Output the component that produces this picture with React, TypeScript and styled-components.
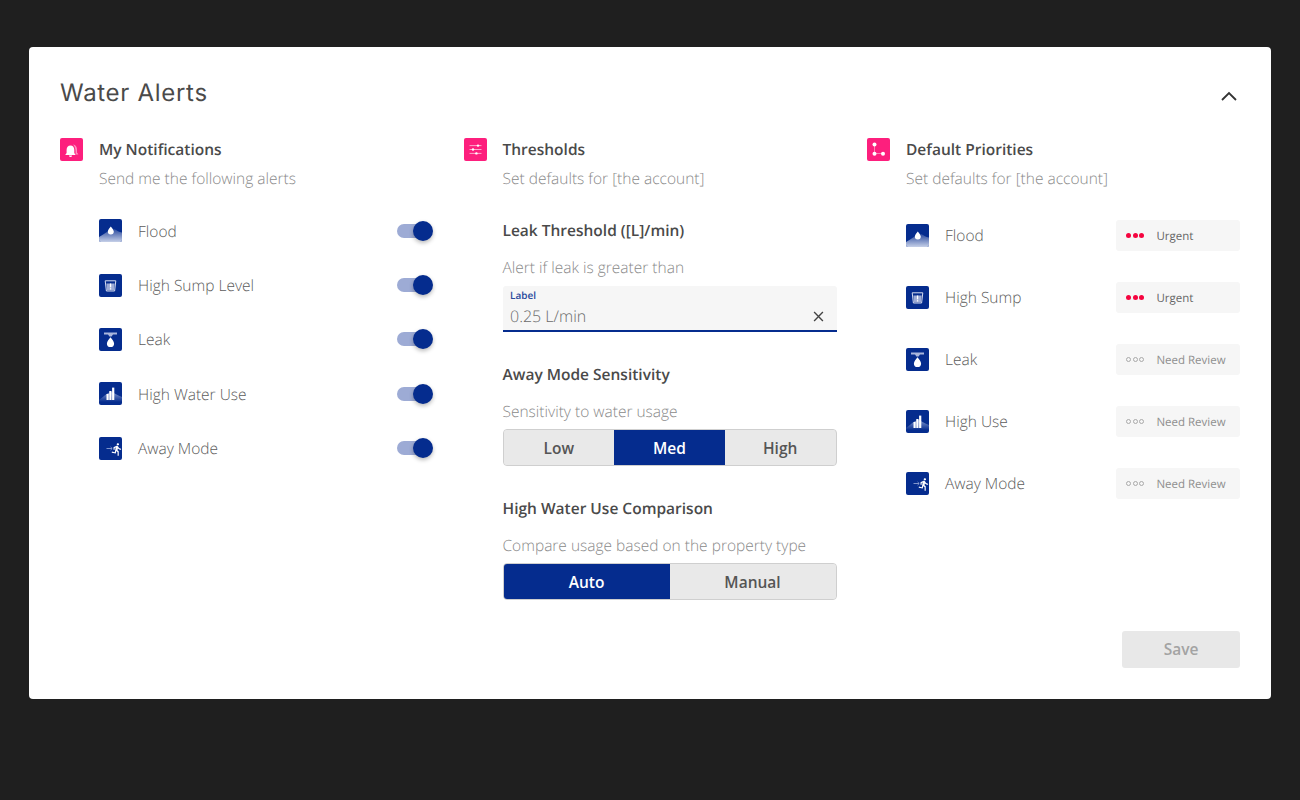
import React from "react";
import styled, { createGlobalStyle } from "styled-components";
import { MdDirectionsRun } from "react-icons/md";

const Global = createGlobalStyle`
  html, body { margin: 0; padding: 0; background: #1f1f1f; }
  body { font-family: "Open Sans", "Liberation Sans", sans-serif; text-rendering: geometricPrecision; }
  * { box-sizing: border-box; }
`;

const Page = styled.div`
  width: 1300px;
  height: 800px;
  padding: 47px 29px 101px;
  background: #1f1f1f;
`;
const Card = styled.main`
  height: 652px;
  background: #fff;
  border-radius: 4px;
  padding: 0 31px 31px;
  display: flex;
  flex-direction: column;
`;
const Header = styled.header`
  height: 90px;
  display: flex;
  justify-content: space-between;
  align-items: flex-start;
`;
const Title = styled.h1`
  margin: 29px 0 0;
  font-family: "Inter", "Liberation Sans", sans-serif;
  font-size: 24px;
  line-height: 33px;
  font-weight: 400;
  letter-spacing: 0.7px;
  color: #4a4a4a;
`;
const Collapse = styled.svg`
  width: 18px;
  height: 12px;
  margin: 43px 2px 0 0;
`;
const Columns = styled.div`
  flex: 1;
  display: grid;
  grid-template-columns: 403.5px 403.5px 1fr;
`;
const Column = styled.section`
  display: flex;
  flex-direction: column;
`;
const SectionHead = styled.div`
  display: grid;
  grid-template-columns: 39px 1fr;
  align-items: center;
`;
const PinkIcon = styled.span`
  width: 23px;
  height: 23px;
  border-radius: 2px;
  background: #fd1f7d;
  display: block;
`;
const PinkSvg = styled.svg`
  width: 23px;
  height: 23px;
  display: block;
`;
const SectionTitle = styled.h2`
  margin: 0;
  font-size: 15.5px;
  line-height: 24px;
  font-weight: 600;
  color: #4a4a4a;
`;
const SectionSub = styled.p`
  margin: 5px 0 0 39px;
  font-size: 15.5px;
  line-height: 24px;
  font-weight: 300;
  color: #8a8a8a;
`;
const AlertList = styled.ul<{ $top: number }>`
  list-style: none;
  margin: ${(p) => p.$top}px 0 0 39px;
  padding: 0;
  display: flex;
  flex-direction: column;
`;
const AlertRow = styled.li<{ $pitch: number }>`
  height: ${(p) => p.$pitch}px;
  display: flex;
  align-items: center;
  justify-content: space-between;
`;
const AlertLabel = styled.div`
  display: flex;
  align-items: center;
  gap: 16px;
  font-size: 15.5px;
  font-weight: 300;
  color: #5c5c5c;
`;
const BlueSvg = styled.svg`
  width: 23px;
  height: 23px;
  display: block;
  flex: none;
`;
const Toggle = styled.span`
  position: relative;
  display: block;
  width: 36px;
  height: 20px;
  margin-right: 31px;
  &::before {
    content: "";
    position: absolute;
    left: 0;
    top: 3px;
    width: 33px;
    height: 14px;
    border-radius: 7px;
    background: #9dabd5;
  }
  &::after {
    content: "";
    position: absolute;
    right: 0;
    top: 0;
    width: 20px;
    height: 20px;
    border-radius: 50%;
    background: #052c8e;
    box-shadow: 0 2px 4px rgba(0, 0, 0, 0.28);
  }
`;
const Thresholds = styled.div`
  margin: 0 0 0 39px;
  width: 334px;
  display: flex;
  flex-direction: column;
`;
const FieldTitle = styled.h3<{ $top: number }>`
  margin: ${(p) => p.$top}px 0 0;
  font-size: 15.5px;
  line-height: 24px;
  font-weight: 600;
  color: #4a4a4a;
`;
const FieldSub = styled.p<{ $gap: number }>`
  margin: 13px 0 ${(p) => p.$gap}px;
  font-size: 15.5px;
  line-height: 24px;
  font-weight: 300;
  color: #8a8a8a;
`;
const InputBox = styled.div`
  height: 46px;
  background: #f6f6f6;
  border-radius: 3px 3px 0 0;
  border-bottom: 2px solid #052c8e;
  padding: 1px 12.5px 1px 7.5px;
  display: grid;
  grid-template-columns: 1fr auto;
  align-items: center;
`;
const InputLabel = styled.label`
  grid-column: 1 / 3;
  font-size: 10px;
  line-height: 14px;
  font-weight: 600;
  color: #2a4a9c;
`;
const InputValue = styled.span`
  font-size: 16px;
  line-height: 24px;
  font-weight: 300;
  color: #6a6a6a;
`;
const ClearSvg = styled.svg`
  width: 11px;
  height: 11px;
  display: block;
`;
const Segmented = styled.div<{ $count: number }>`
  height: 37px;
  display: grid;
  grid-template-columns: repeat(${(p) => p.$count}, 1fr);
  border: 1px solid #cfcfcf;
  border-radius: 4px;
  overflow: hidden;
  background: #e9e9e9;
`;
const Segment = styled.button<{ $active?: boolean }>`
  border: 0;
  padding: 0;
  font: 600 15.5px "Open Sans", "Liberation Sans", sans-serif;
  color: ${(p) => (p.$active ? "#fff" : "#555")};
  background: ${(p) => (p.$active ? "#052c8e" : "#e9e9e9")};
`;
const Chip = styled.div<{ $urgent?: boolean }>`
  width: 124px;
  height: 31px;
  border-radius: 3px;
  background: #f6f6f6;
  padding-left: 10px;
  display: flex;
  align-items: center;
  gap: 12px;
  font-size: 11.5px;
  font-weight: 400;
  color: ${(p) => (p.$urgent ? "#666" : "#8f8f8f")};
`;
const ChipText = styled.span`
  padding-top: 2px;
`;
const Dots = styled.span`
  display: flex;
  gap: 1.7px;
`;
const Dot = styled.i<{ $urgent?: boolean }>`
  width: 5px;
  height: 5px;
  border-radius: 50%;
  display: block;
  background: ${(p) => (p.$urgent ? "#f5043f" : "transparent")};
  border: ${(p) => (p.$urgent ? "0" : "1px solid #a9a9a9")};
`;
const Footer = styled.footer`
  display: flex;
  justify-content: flex-end;
`;
const SaveButton = styled.button`
  width: 118px;
  height: 37px;
  border: 0;
  border-radius: 3px;
  background: #e8e8e8;
  color: #a3a3a3;
  padding: 0 0 1px;
  font: 600 15.5px "Open Sans", "Liberation Sans", sans-serif;
`;

const Grad = ({ id, from, to }: { id: string; from: string; to: string }) => (
  <defs>
    <linearGradient id={id} x1="0" y1="0" x2="0" y2="1">
      <stop offset="0" stopColor={from} />
      <stop offset="1" stopColor={to} />
    </linearGradient>
  </defs>
);
const Base = () => <rect width="23" height="23" rx="2" fill="#052c8e" />;

const Drop = ({ x, y, s = 1 }: { x: number; y: number; s?: number }) => (
  <path
    transform={`translate(${x} ${y}) scale(${s})`}
    d="M0 -4 C1.2 -2.2 3 -0.6 3 1.2 A3 3 0 0 1 -3 1.2 C-3 -0.6 -1.2 -2.2 0 -4Z"
    fill="#fff"
  />
);

const FloodIcon = ({ uid }: { uid: string }) => (
  <BlueSvg viewBox="0 0 23 23">
    <Grad id={uid} from="#2a4a9e" to="#c6d0e8" />
    <Base />
    <path d="M0 18 C5 15 10 11 15 10 C18 11.5 20 13 23 13.5 V21 a2 2 0 0 1 -2 2 H2 a2 2 0 0 1 -2 -2Z" fill={`url(#${uid})`} />
    <Drop x={11.8} y={11.4} s={1} />
  </BlueSvg>
);
const SumpIcon = () => (
  <BlueSvg viewBox="0 0 23 23">
    <Base />
    <path d="M6.2 6.8 H16.8 L15.6 17 H7.4Z" fill="none" stroke="#d6dcf0" strokeWidth="1" />
    <path d="M7.4 9.5 H15.7 L15 16.4 H8Z" fill="#9dabd5" />
    <rect x="10.9" y="9.5" width="1.3" height="3.9" fill="#fff" />
    <rect x="10.9" y="14.2" width="1.3" height="1.3" fill="#fff" />
  </BlueSvg>
);
const LeakIcon = () => (
  <BlueSvg viewBox="0 0 23 23">
    <Base />
    <path d="M5 4.5 H18 V6.6 H14 L12.6 8.6 H10.4 L9 6.6 H5Z" fill="#a9b6dc" />
    <Drop x={11.5} y={14} s={1.2} />
  </BlueSvg>
);
const UseIcon = ({ uid }: { uid: string }) => (
  <BlueSvg viewBox="0 0 23 23">
    <Grad id={uid} from="#7f95cc" to="#052c8e" />
    <Base />
    <path d="M0 18 C4 15 8 11 11.5 10 C15 10.5 19 14 23 15 V20 H0Z" fill={`url(#${uid})`} />
    <rect x="7.5" y="12" width="2.2" height="6" fill="#fff" />
    <rect x="10.3" y="9" width="2.2" height="9" fill="#fff" />
    <rect x="13.1" y="5.6" width="2.2" height="12.4" fill="#fff" />
  </BlueSvg>
);
const AwayIcon = () => (
  <BlueSvg viewBox="0 0 23 23">
    <Base />
    <path d="M7.5 11.5 H13 M11.6 10 L13.2 11.5 L11.6 13" fill="none" stroke="#8fa0d2" strokeWidth="0.9" />
    <MdDirectionsRun x={11} y={5.3} size={14} color="#fff" />
  </BlueSvg>
);

const BellGlyph = () => (
  <PinkSvg viewBox="0 0 23 23">
    <path d="M13 6.4 C15.8 6.7 17 9 17 11.4 V14.6 L18.4 16.4 H15.6 V14 C15.6 10.8 14.8 8.2 13 6.4Z" fill="#fff" opacity="0.5" />
    <path d="M10.5 7.6 C13 7.6 14.3 9.6 14.3 12 V15 L15.6 17 H5.2 L6.6 15 V12 C6.6 9.6 8 7.6 10.5 7.6Z" fill="#fff" />
    <path d="M9 17.6 H12 A1.5 1.5 0 0 1 9 17.6Z" fill="#fff" />
  </PinkSvg>
);
const SliderGlyph = () => (
  <PinkSvg viewBox="0 0 23 23" stroke="#fff" fill="#fff">
    <path d="M5.5 7.6 H17.5 M5.5 11.5 H17.5 M5.5 15.4 H17.5" strokeWidth="0.8" opacity="0.75" />
    <circle cx="14" cy="7.6" r="1.2" strokeWidth="0" />
    <circle cx="9" cy="11.5" r="1.2" strokeWidth="0" />
    <circle cx="12.4" cy="15.4" r="1.2" strokeWidth="0" />
  </PinkSvg>
);
const PriorityGlyph = () => (
  <PinkSvg viewBox="0 0 23 23">
    <path d="M7.5 7 V15.5 H16" fill="none" stroke="#fff" strokeWidth="0.7" opacity="0.6" />
    <circle cx="7.5" cy="6.6" r="2" fill="#fff" />
    <circle cx="7.5" cy="15.7" r="2" fill="#fff" />
    <circle cx="16" cy="15.7" r="2" fill="#fff" />
  </PinkSvg>
);

const notifications = [
  { label: "Flood", icon: <FloodIcon uid="f1" /> },
  { label: "High Sump Level", icon: <SumpIcon /> },
  { label: "Leak", icon: <LeakIcon /> },
  { label: "High Water Use", icon: <UseIcon uid="u1" /> },
  { label: "Away Mode", icon: <AwayIcon /> },
];
const priorities = [
  { label: "Flood", icon: <FloodIcon uid="f2" />, urgent: true },
  { label: "High Sump", icon: <SumpIcon />, urgent: true },
  { label: "Leak", icon: <LeakIcon />, urgent: false },
  { label: "High Use", icon: <UseIcon uid="u2" />, urgent: false },
  { label: "Away Mode", icon: <AwayIcon />, urgent: false },
];

export default function App() {
  return (
    <Page>
      <Global />
      <Card>
        <Header>
          <Title>Water Alerts</Title>
          <Collapse viewBox="0 0 18 12">
            <path d="M2 10 L9 3 L16 10" fill="none" stroke="#333" strokeWidth="1.8" />
          </Collapse>
        </Header>
        <Columns>
          <Column>
            <SectionHead>
              <PinkIcon><BellGlyph /></PinkIcon>
              <SectionTitle>My Notifications</SectionTitle>
            </SectionHead>
            <SectionSub>Send me the following alerts</SectionSub>
            <AlertList $top={13.5}>
              {notifications.map((n) => (
                <AlertRow key={n.label} $pitch={54.4}>
                  <AlertLabel>{n.icon}{n.label}</AlertLabel>
                  <Toggle />
                </AlertRow>
              ))}
            </AlertList>
          </Column>
          <Column>
            <SectionHead>
              <PinkIcon><SliderGlyph /></PinkIcon>
              <SectionTitle>Thresholds</SectionTitle>
            </SectionHead>
            <SectionSub>Set defaults for [the account]</SectionSub>
            <Thresholds>
              <FieldTitle $top={28}>Leak Threshold ([L]/min)</FieldTitle>
              <FieldSub $gap={7}>Alert if leak is greater than</FieldSub>
              <InputBox>
                <InputLabel>Label</InputLabel>
                <InputValue>0.25 L/min</InputValue>
                <ClearSvg viewBox="0 0 12 12">
                  <path d="M1.2 1.2 L10.8 10.8 M10.8 1.2 L1.2 10.8" stroke="#444" strokeWidth="1.5" />
                </ClearSvg>
              </InputBox>
              <FieldTitle $top={30}>Away Mode Sensitivity</FieldTitle>
              <FieldSub $gap={6}>Sensitivity to water usage</FieldSub>
              <Segmented $count={3}>
                <Segment>Low</Segment>
                <Segment $active>Med</Segment>
                <Segment>High</Segment>
              </Segmented>
              <FieldTitle $top={30}>High Water Use Comparison</FieldTitle>
              <FieldSub $gap={6}>Compare usage based on the property type</FieldSub>
              <Segmented $count={2}>
                <Segment $active>Auto</Segment>
                <Segment>Manual</Segment>
              </Segmented>
            </Thresholds>
          </Column>
          <Column>
            <SectionHead>
              <PinkIcon><PriorityGlyph /></PinkIcon>
              <SectionTitle>Default Priorities</SectionTitle>
            </SectionHead>
            <SectionSub>Set defaults for [the account]</SectionSub>
            <AlertList $top={14}>
              {priorities.map((n) => (
                <AlertRow key={n.label} $pitch={62}>
                  <AlertLabel>{n.icon}{n.label}</AlertLabel>
                  <Chip $urgent={n.urgent}>
                    <Dots>
                      <Dot $urgent={n.urgent} />
                      <Dot $urgent={n.urgent} />
                      <Dot $urgent={n.urgent} />
                    </Dots>
                    <ChipText>{n.urgent ? "Urgent" : "Need Review"}</ChipText>
                  </Chip>
                </AlertRow>
              ))}
            </AlertList>
          </Column>
        </Columns>
        <Footer>
          <SaveButton>Save</SaveButton>
        </Footer>
      </Card>
    </Page>
  );
}
